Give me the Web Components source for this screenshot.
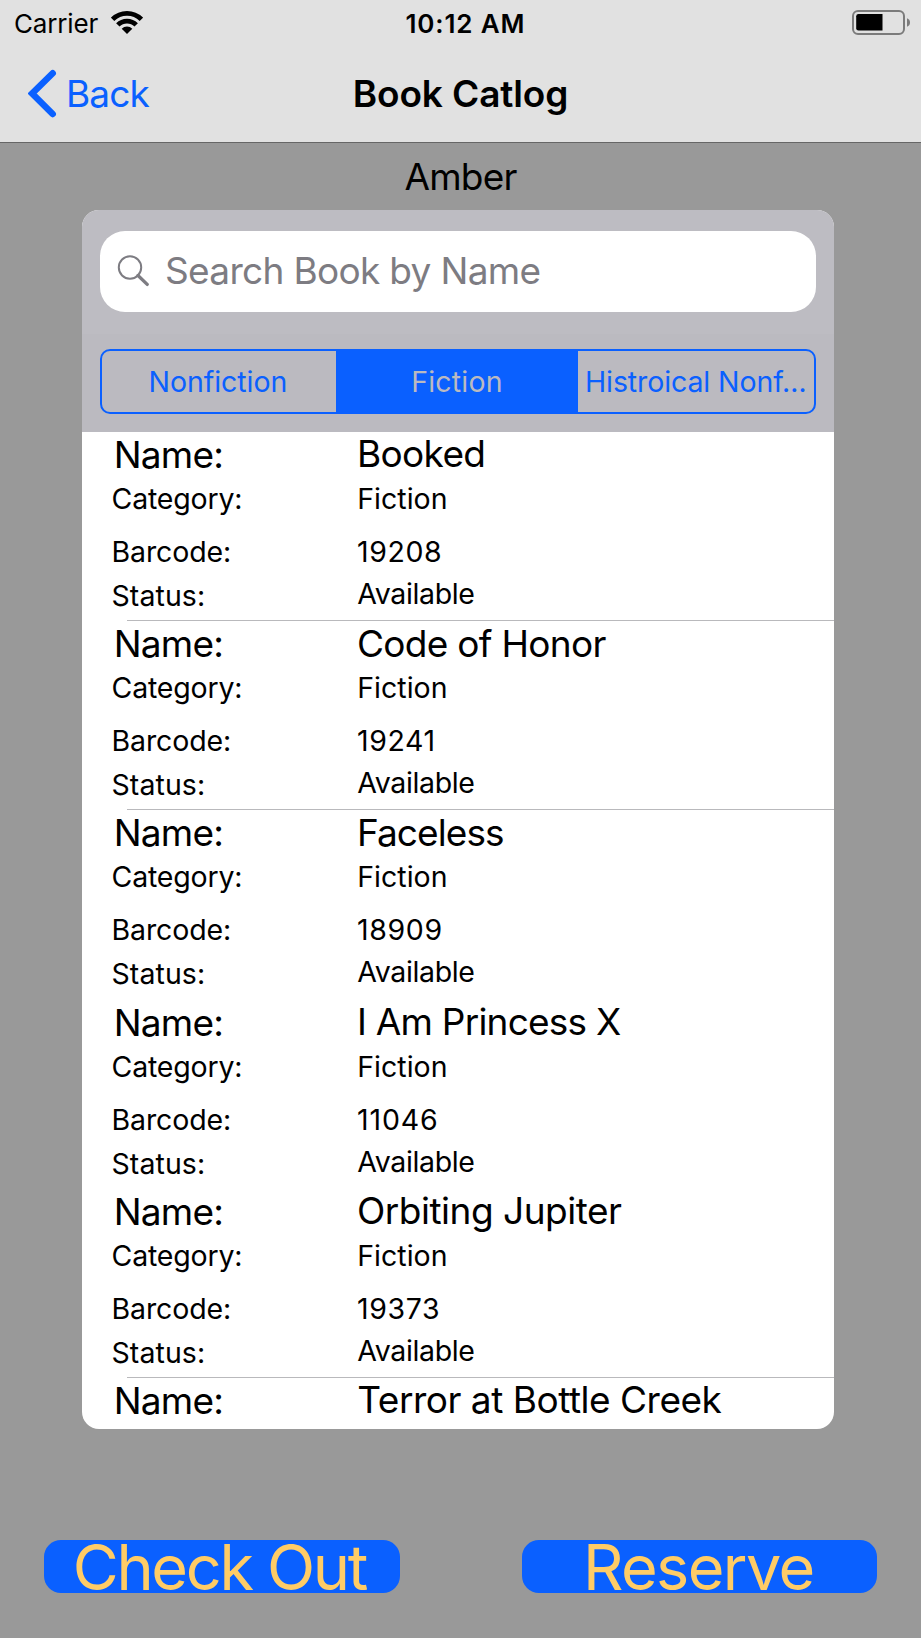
<!DOCTYPE html>
<html lang="en">
<head>
<meta charset="utf-8">
<title>Book Catlog</title>
<style>
html,body{margin:0;padding:0;background:#999}
body{font-family:Inter,"Liberation Sans",sans-serif;color:#000}
</style>
</head>
<body>
<book-app></book-app>
<script>
const define = (name, html, setup) => {
  const t = document.createElement('template');
  t.innerHTML = html;
  customElements.define(name, class extends HTMLElement {
    connectedCallback() {
      if (this.shadowRoot) return;
      this.attachShadow({mode: 'open'}).append(t.content.cloneNode(true));
      if (setup) setup(this, this.shadowRoot);
    }
  });
};

/* One line of text whose box runs from cap top to baseline and is as wide as its ink. */
const ctx = document.createElement('canvas').getContext('2d');
define('ui-text', `<style>
:host{display:block;flex:none;white-space:pre;overflow:visible}
span{display:block;width:max-content}
</style><span><slot></slot></span>`, (el, root) => {
  const size = +el.getAttribute('size'), ink = +el.getAttribute('ink');
  const weight = el.getAttribute('weight') || 400, text = el.textContent;
  ctx.font = `${weight} ${size}px Inter`;
  const m = ctx.measureText(text);
  const natural = m.actualBoundingBoxRight + m.actualBoundingBoxLeft;
  const cap = Math.round(size * .727);
  el.style.width = ink + 'px';
  el.style.height = cap + 'px';
  root.querySelector('span').style.cssText =
    `font-size:${size}px;font-weight:${weight};line-height:${cap}px;` +
    `letter-spacing:${(ink - natural) / (text.length - 1)}px;margin-left:${m.actualBoundingBoxLeft}px`;
});

define('wifi-icon', `<style>:host{display:block;width:32px;height:23px}svg{display:block}</style>
<svg width="32" height="23" viewBox="0 0 32 23"><g fill="none" stroke="#000" stroke-width="4.800">
<path d="M1.600 8.400a20.400 20.400 0 0 1 28.800 0"/><path d="M6.800 13.900a13 13 0 0 1 18.400 0"/></g>
<path d="M10.700 17.700a7.500 7.500 0 0 1 10.600 0L16 22.900z"/></svg>`);

define('battery-icon', `<style>:host{display:block;width:58px;height:25px}svg{display:block}</style>
<svg width="58" height="25" viewBox="0 0 58 25"><rect x="1" y="1" width="51" height="23" rx="5" fill="none" stroke="#7b7b7b" stroke-width="2"/>
<path d="M6.500 4H30.500V20.500H6.500a2.300 2.300 0 0 1-2.300-2.300V6.300A2.300 2.300 0 0 1 6.500 4z"/>
<path d="M55 8.200c1.800.7 3 2.200 3 4.200s-1.200 3.600-3 4.300z" fill="#7b7b7b"/></svg>`);

define('status-bar', `<style>
:host{display:grid;grid-template-columns:1fr auto 1fr;height:45px;padding:0 11px 0 15px;box-sizing:border-box}
.l{display:flex;align-items:flex-start}
.l ui-text{margin-top:14px} wifi-icon{margin:11px 0 0 12px}
.t{margin:14px 0 0 5px} battery-icon{justify-self:end;margin-top:10px}
</style><div class="l"><ui-text size="26" ink="83.5">Carrier</ui-text><wifi-icon></wifi-icon></div>
<ui-text class="t" size="26" weight="600" ink="117">10:12 AM</ui-text><battery-icon></battery-icon>`);

define('nav-bar', `<style>
:host{display:grid;grid-template-columns:1fr auto 1fr;height:97px;padding:0 28px}
.b{display:flex;color:#0a60ff} svg{display:block;margin-top:24px;flex:none}
.b ui-text{margin:35px 0 0 12px} .t{margin-top:35px}
</style><div class="b"><svg width="29" height="49" viewBox="0 0 29 49"><path d="M24.700 4.200L4.200 24.500 24.700 45" fill="none" stroke="#0a60ff" stroke-width="6.500" stroke-linecap="round"/></svg>
<ui-text size="37" ink="80.500">Back</ui-text></div>
<ui-text class="t" size="37" weight="600" ink="211.500">Book Catlog</ui-text><span></span>`);

define('top-bar', `<style>:host{display:block;background:#e1e1e1;border-bottom:1px solid #666}</style>
<status-bar></status-bar><nav-bar></nav-bar>`);

define('search-field', `<style>
:host{display:block;padding:21px 18px 22px;background:#bdbcc2}
.f{display:flex;height:81px;background:#fff;border-radius:25px;color:#7d7c82}
svg{margin:24px 0 0 17px;flex:none} ui-text{margin:26px 0 0 18px}
</style><div class="f"><svg width="32" height="32" viewBox="0 0 32 32" fill="none" stroke="#7d7c82"><circle cx="13" cy="12.500" r="11.200" stroke-width="2"/><path d="M21 20.500L30.200 29.400" stroke-width="3.300" stroke-linecap="round"/></svg>
<ui-text size="37" ink="372.500">Search Book by Name</ui-text></div>`);

define('scope-bar', `<style>
:host{display:block;padding:15px 18px 18px;background:#bbbac0}
.s{display:grid;grid-template-columns:234px 242px 1fr;height:61px;border:2px solid #0a60ff;border-radius:10px;overflow:hidden;color:#0a60ff}
.s>div{display:flex;justify-content:center;padding:20px 2px 0 0}
.s>.on{background:#0a60ff;color:#bbbac0;padding-right:0}
.s>.on+div{padding-right:0}
</style><div class="s"><div><ui-text size="28.5" ink="135">Nonfiction</ui-text></div><div class="on"><ui-text size="28.5" ink="87.500">Fiction</ui-text></div><div><ui-text size="28.5" ink="218">Histroical Nonf…</ui-text></div></div>`);

define('book-row', `<style>
:host{display:grid;grid-template-columns:246px 1fr;height:189.200px;padding-left:30px;box-sizing:border-box;position:relative}
:host([partial]){height:auto}
.n{margin:9px 0 0 4.700px}.c{margin:20px 0 0 .5px}.b{margin:32px 0 0 1.500px}.s{margin:23px 0 0 .5px}
.v .n{margin-left:1px;margin-top:8.400px}.v .n.stem{margin-left:2px}.v .n.bar{margin-left:.3px}
.v .s{margin:21px 0 0 -.7px}.v .c{margin-left:1.200px;margin-top:20.600px}.v .b{margin-left:0}
i{display:none;position:absolute;left:45px;right:0;top:188px;height:1px;background:#b9b9bc}
:host([line]) i{display:block}
</style><div class="k"></div><div class="v"></div><i></i>`, (el, root) => {
  const add = (col, cls, size, ink, text) => {
    const t = document.createElement('ui-text');
    t.className = cls; t.setAttribute('size', size); t.setAttribute('ink', ink);
    t.textContent = text; root.querySelector(col).append(t);
  };
  const name = el.getAttribute('name');
  const edge = /^[BFI]/.test(name) ? ' stem' : /^T/.test(name) ? ' bar' : '';
  add('.k', 'n', 37, 104.5, 'Name:');
  add('.v', 'n' + edge, 37, el.getAttribute('name-ink'), name);
  if (el.hasAttribute('partial')) return;
  add('.k', 'c', 28.5, 127.7, 'Category:');
  add('.k', 'b', 28.5, 115.5, 'Barcode:');
  add('.k', 's', 28.5, 90.5, 'Status:');
  add('.v', 'c', 28.5, 86.5, 'Fiction');
  add('.v', 'b', 28.5, el.getAttribute('code-ink'), el.getAttribute('code'));
  add('.v', 's', 28.5, 117, 'Available');
});

define('book-card', `<style>
:host{display:block;width:752px;height:1219px;margin:0 0 0 82px;border-radius:17px;overflow:hidden;background:#fff}
</style><search-field></search-field><scope-bar></scope-bar>
<book-row line name="Booked" name-ink="123.3" code="19208" code-ink="82"></book-row>
<book-row line name="Code of Honor" name-ink="247.500" code="19241" code-ink="75.500"></book-row>
<book-row name="Faceless" name-ink="143" code="18909" code-ink="82.500"></book-row>
<book-row name="I Am Princess X" name-ink="261" code="11046" code-ink="78"></book-row>
<book-row line name="Orbiting Jupiter" name-ink="263" code="19373" code-ink="80"></book-row>
<book-row partial name="Terror at Bottle Creek" name-ink="363.300"></book-row>`);

define('action-bar', `<style>
:host{display:flex;justify-content:space-between;padding:111px 44px 0 44px}
button{all:unset;display:flex;justify-content:center;align-items:flex-start;width:355.500px;height:53px;background:#0a60ff;border-radius:17px;color:#fc6}
ui-text{margin-top:4px}
.r{margin-left:2px}
</style><button><ui-text size="63" ink="292">Check Out</ui-text></button><button><ui-text class="r" size="63" ink="224.500">Reserve</ui-text></button>`);

define('book-app', `<style>
:host{display:block;width:921px;height:1638px;overflow:hidden;background:#999}
.u{display:flex;justify-content:center;height:67px;padding:20px 0 0 1px;box-sizing:border-box}
</style><top-bar></top-bar><div class="u"><ui-text size="37" ink="112.800">Amber</ui-text></div><book-card></book-card><action-bar></action-bar>`);
</script>
</body>
</html>
